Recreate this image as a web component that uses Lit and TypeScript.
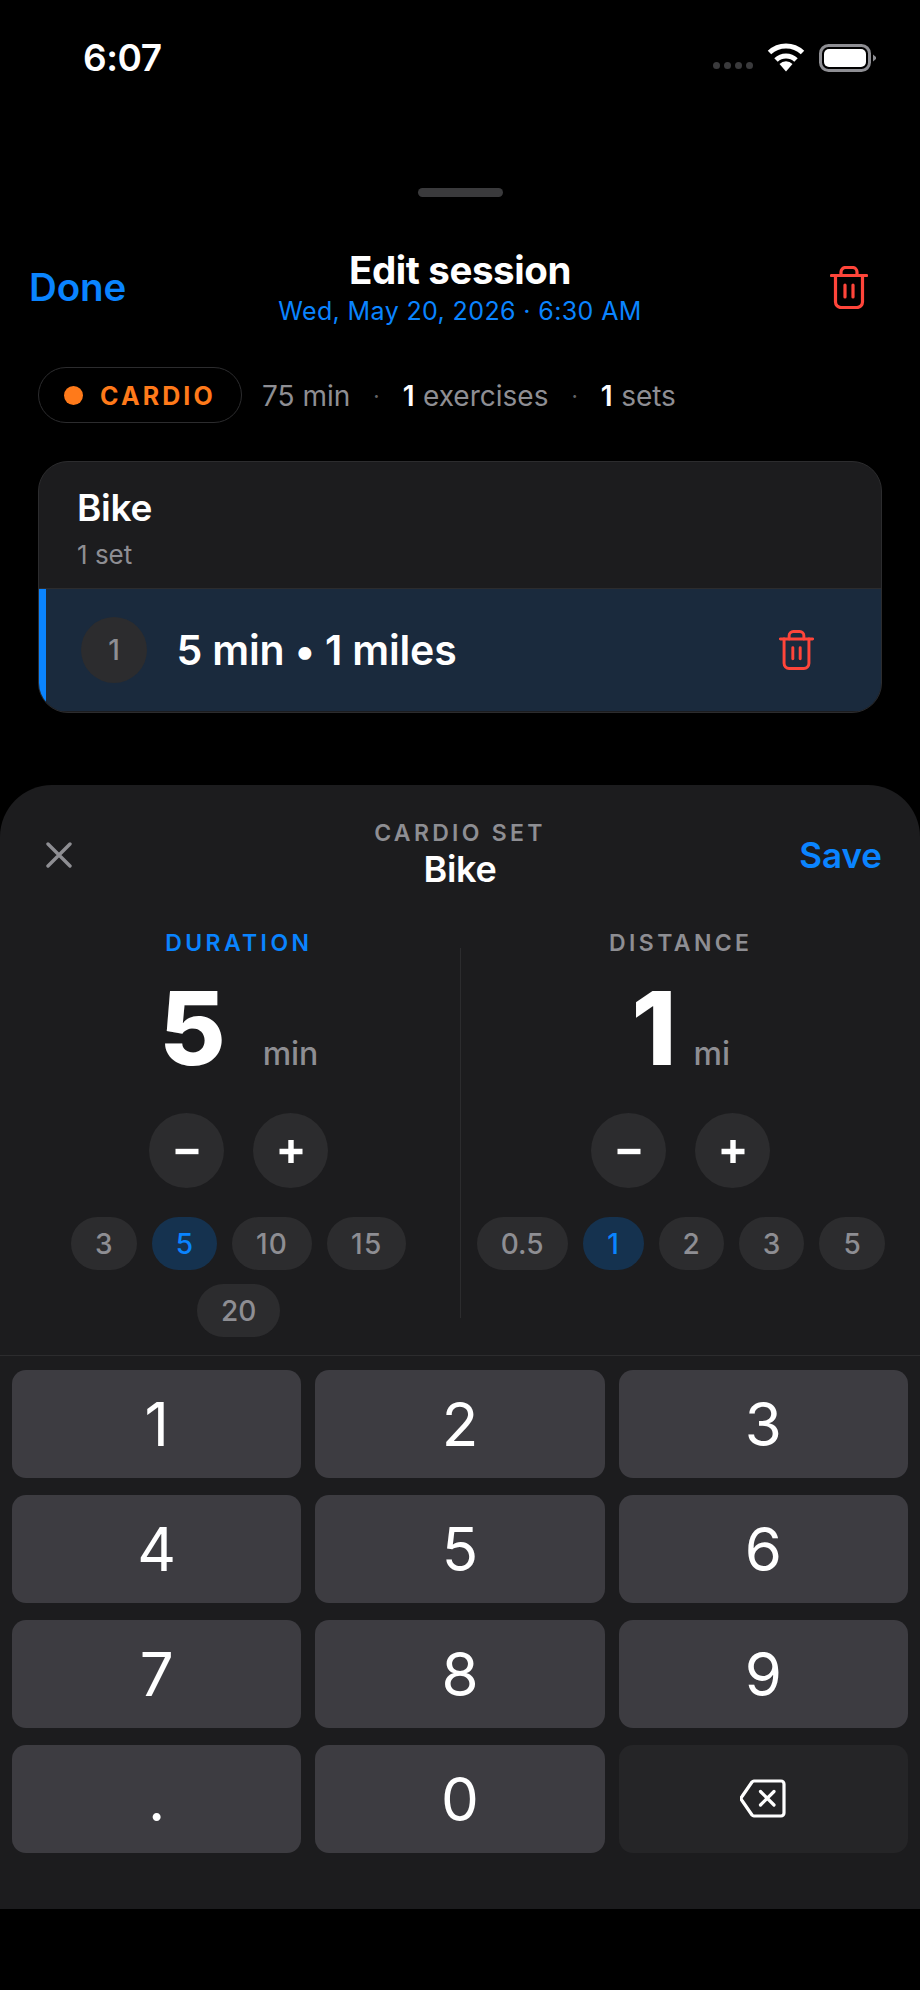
import { LitElement, html, css } from "lit";
import { customElement } from "lit/decorators.js";

const trash = (cls: string) => html`<svg class=${cls} viewBox="0 0 38 43" fill="none" stroke="#ff453a" stroke-width="3.2" stroke-linecap="round" stroke-linejoin="round">
  <path d="M1.5 9.5H36.5"/>
  <path d="M11 9.5V6a4.5 4.5 0 0 1 4.5-4.5h7A4.5 4.5 0 0 1 27 6v3.5"/>
  <path d="M5.5 9.5V36a5.5 5.5 0 0 0 5.5 5.5h16a5.5 5.5 0 0 0 5.5-5.5V9.5"/>
  <path d="M15 19V31"/><path d="M23 19V31"/>
</svg>`;

@customElement("app-root")
export class AppRoot extends LitElement {
  static styles = css`
    :host { display: block; width: 920px; height: 1990px; background: #000; color: #fff; font-family: Inter, "Noto Sans", sans-serif; overflow: hidden; }
    .status { height: 110px; display: flex; align-items: center; justify-content: space-between; padding: 4px 43px 0 83px; box-sizing: border-box; }
    .time { font-size: 37px; font-weight: 600; letter-spacing: -0.5px; }
    .sys { display: flex; align-items: flex-end; }
    .dots { display: flex; gap: 4px; margin-right: 14px; margin-bottom: 3px; }
    .dots i { width: 7px; height: 7px; border-radius: 50%; background: #3a3a3c; display: block; }
    .wifi { width: 38px; height: 30px; margin-right: 14px; display: block; }
    .batt { width: 58px; height: 28px; display: block; }
    .handle { width: 85px; height: 9px; border-radius: 5px; background: #3a3a3c; margin: 78px auto 0; }
    .nav { display: grid; grid-template-columns: 1fr auto 1fr; align-items: center; margin-top: 47px; padding: 0 38px; height: 86px; }
    .done { font-size: 38.5px; font-weight: 600; color: #0a84ff; letter-spacing: -0.1px; margin-left: -9px; }
    .nav-c { text-align: center; }
    .title { font-size: 38.5px; font-weight: 700; line-height: 44px; letter-spacing: -0.4px; }
    .date { font-size: 25px; color: #0a84ff; line-height: 32px; margin-top: 3px; letter-spacing: 0.38px; }
    .nav-r { display: flex; justify-content: flex-end; padding-right: 14px; }
    .trash-l { width: 38px; height: 43px; display: block; }
    .trash-s { width: 35px; height: 40px; display: block; margin-top: 1px; }
    .meta { display: flex; align-items: center; margin: 37px 38px 0; height: 56px; font-size: 28px; color: #8e8e93; }
    .meta > span, .meta > b { padding-top: 2px; }
    .pill { height: 56px; width: 204px; box-sizing: border-box; border: 1.5px solid #2c2c2e; border-radius: 28px; display: flex; align-items: center; padding-left: 25px; gap: 17px; margin-right: 20px; }
    .pill i { width: 19px; height: 19px; border-radius: 50%; background: #ff7a1a; display: block; }
    .pill span { font-size: 25px; font-weight: 700; color: #ff7a1a; letter-spacing: 3.1px; padding-top: 2px; }
    .sep { margin: 0 23px; font-size: 22px; color: #636366; }
    .meta b { color: #fff; font-weight: 600; margin-right: 8.5px; }
    .card { margin: 38px 38px 0; height: 252px; box-sizing: border-box; border-radius: 30px; border: 1.5px solid #2c2c2e; background: #1c1c1e; overflow: hidden; }
    .card-h { height: 126.5px; box-sizing: border-box; padding: 24px 38px 0; border-bottom: 1.5px solid #2c2c2e; }
    .card-t { font-size: 37px; font-weight: 600; line-height: 44px; letter-spacing: -0.3px; }
    .card-s { font-size: 26px; color: #8e8e93; line-height: 30px; margin-top: 10px; }
    .row { height: 122.5px; background: #1a2a3d; border-left: 7px solid #0a84ff; display: flex; align-items: center; padding-left: 35px; padding-right: 67px; box-sizing: border-box; }
    .num { width: 66px; height: 66px; border-radius: 50%; background: #2c2c2e; display: flex; align-items: center; justify-content: center; color: #8e8e93; font-size: 28px; font-weight: 500; }
    .row-t { flex: 1; margin-left: 29.5px; font-size: 41px; font-weight: 600; letter-spacing: -0.2px; }
    .sheet { margin-top: 72px; height: 1124px; background: #1c1c1e; border-radius: 52px 52px 0 0; display: flex; flex-direction: column; }
    .sh-h { height: 140px; display: grid; grid-template-columns: 1fr auto 1fr; align-items: center; padding: 0 38px; }
    .x { width: 26px; height: 26px; display: block; margin-left: 8px; }
    .sh-c { text-align: center; padding-bottom: 3px; }
    .sh-k { font-size: 23px; font-weight: 600; color: #8e8e93; letter-spacing: 3.3px; line-height: 30px; }
    .sh-t { font-size: 36px; font-weight: 600; line-height: 42px; letter-spacing: -0.3px; }
    .save { justify-self: end; font-size: 35px; font-weight: 600; color: #0a84ff; }
    .cols { display: grid; grid-template-columns: 1fr 1px 1fr; height: 430px; }
    .col { display: flex; flex-direction: column; align-items: center; }
    .col.l { padding: 0 10px 0 28px; }
    .col.r { padding: 0 29px 0 10px; }
    .vline { background: #2c2c2e; height: 370px; margin-top: 23px; }
    .lab { font-size: 23px; font-weight: 600; color: #8e8e93; letter-spacing: 3.4px; line-height: 30px; margin-top: 3px; }
    .lab.on { color: #0a84ff; }
    .val { display: flex; align-items: baseline; height: 112px; margin-top: 14px; }
    .big { font-size: 102px; font-weight: 850; line-height: 112px; letter-spacing: -2px; }
    .unit { font-size: 32px; font-weight: 500; color: #8e8e93; }
    .u-min { margin-left: 39px; }
    .u-mi { margin-left: 19px; }
    .steps { display: flex; gap: 29px; margin-top: 29px; }
    .st { width: 75px; height: 75px; border-radius: 50%; background: #2c2c2e; display: flex; align-items: center; justify-content: center; }
    .st svg { width: 24px; height: 24px; display: block; }
    .chips { display: flex; flex-wrap: wrap; justify-content: center; gap: 14px 15px; margin-top: 29px; width: 100%; }
    .chip { height: 53px; box-sizing: border-box; padding: 0 24px; min-width: 61px; border-radius: 27px; background: #2c2c2e; color: #8e8e93; font-size: 28px; font-weight: 500; display: flex; align-items: center; justify-content: center; }
    .chip.two { letter-spacing: 1.2px; }
    .chip.on { background: #15324f; color: #0a84ff; }
    .keys { border-top: 1.5px solid #2c2c2e; padding: 13.5px 12px 0; display: grid; grid-template-columns: repeat(3, 1fr); grid-auto-rows: 108px; gap: 17px 14px; }
    .key { background: #3d3c41; border-radius: 14px; display: flex; align-items: center; justify-content: center; font-size: 60px; font-weight: 400; }
    .key.del { background: #252527; }
    .key.del svg { width: 46px; height: 39px; display: block; }
  `;

  private chips(vals: string[], on: string) {
    return html`<div class="chips">${vals.map(v => html`<div class="chip ${v === on ? "on" : ""} ${v.length === 2 && v !== "20" ? "two" : ""}">${v}</div>`)}</div>`;
  }

  private steppers() {
    return html`<div class="steps">
      <div class="st"><svg viewBox="0 0 24 24" fill="none" stroke="#fff" stroke-width="5.4"><path d="M0.5 12.500H23.500"/></svg></div>
      <div class="st"><svg viewBox="0 0 24 24" fill="none" stroke="#fff" stroke-width="5.4"><path d="M0.5 12.500H23.500M12 1V24"/></svg></div>
    </div>`;
  }

  render() {
    return html`
      <div class="status">
        <div class="time">6:07</div>
        <div class="sys">
          <div class="dots"><i></i><i></i><i></i><i></i></div>
          <svg class="wifi" viewBox="0 0 38 30" fill="none" stroke="#fff" stroke-width="5">
            <path d="M2.5 10.5A24 24 0 0 1 35.5 10.5"/>
            <path d="M9 18A14.5 14.5 0 0 1 29 18"/>
            <path d="M12.5 22 19 29.5 25.5 22A9 9 0 0 0 12.5 22Z" fill="#fff" stroke="none"/>
          </svg>
          <svg class="batt" viewBox="0 0 58 28" fill="none">
            <rect x="1.5" y="1.5" width="49" height="25" rx="8" stroke="#8e8e93" stroke-width="3"/>
            <rect x="5" y="5" width="42" height="18" rx="5" fill="#fff"/>
            <path d="M54 10.5 57 13V15L54 17.5Z" fill="#8e8e93"/>
          </svg>
        </div>
      </div>
      <div class="handle"></div>
      <div class="nav">
        <div class="done">Done</div>
        <div class="nav-c">
          <div class="title">Edit session</div>
          <div class="date">Wed, May 20, 2026 · 6:30 AM</div>
        </div>
        <div class="nav-r">${trash("trash-l")}</div>
      </div>
      <div class="meta">
        <div class="pill"><i></i><span>CARDIO</span></div>
        <span>75 min</span><span class="sep">·</span><b>1</b><span>exercises</span><span class="sep">·</span><b>1</b><span>sets</span>
      </div>
      <div class="card">
        <div class="card-h">
          <div class="card-t">Bike</div>
          <div class="card-s">1 set</div>
        </div>
        <div class="row">
          <div class="num">1</div>
          <div class="row-t">5 min • 1 miles</div>
          ${trash("trash-s")}
        </div>
      </div>
      <div class="sheet">
        <div class="sh-h">
          <svg class="x" viewBox="0 0 26 26" fill="none" stroke="#8e8e93" stroke-width="3.4" stroke-linecap="round"><path d="M2 2 24 24M24 2 2 24"/></svg>
          <div class="sh-c">
            <div class="sh-k">CARDIO SET</div>
            <div class="sh-t">Bike</div>
          </div>
          <div class="save">Save</div>
        </div>
        <div class="cols">
          <div class="col l">
            <div class="lab on">DURATION</div>
            <div class="val"><span class="big">5</span><span class="unit u-min">min</span></div>
            ${this.steppers()}
            ${this.chips(["3", "5", "10", "15", "20"], "5")}
          </div>
          <div class="vline"></div>
          <div class="col r">
            <div class="lab">DISTANCE</div>
            <div class="val"><span class="big">1</span><span class="unit u-mi">mi</span></div>
            ${this.steppers()}
            ${this.chips(["0.5", "1", "2", "3", "5"], "1")}
          </div>
        </div>
        <div class="keys">
          ${["1","2","3","4","5","6","7","8","9",".","0"].map(k => html`<div class="key">${k}</div>`)}
          <div class="key del">
            <svg viewBox="0 0 46 39" fill="none" stroke="#fff" stroke-width="3.2" stroke-linecap="round" stroke-linejoin="round">
              <path d="M14 2H41a3 3 0 0 1 3 3V34a3 3 0 0 1-3 3H14a3 3 0 0 1-2-1L2 21.5a3 3 0 0 1 0-4L12 3a3 3 0 0 1 2-1Z"/>
              <path d="M20.5 12.5 34 26M34 12.5 20.5 26"/>
            </svg>
          </div>
        </div>
      </div>
    `;
  }
}
